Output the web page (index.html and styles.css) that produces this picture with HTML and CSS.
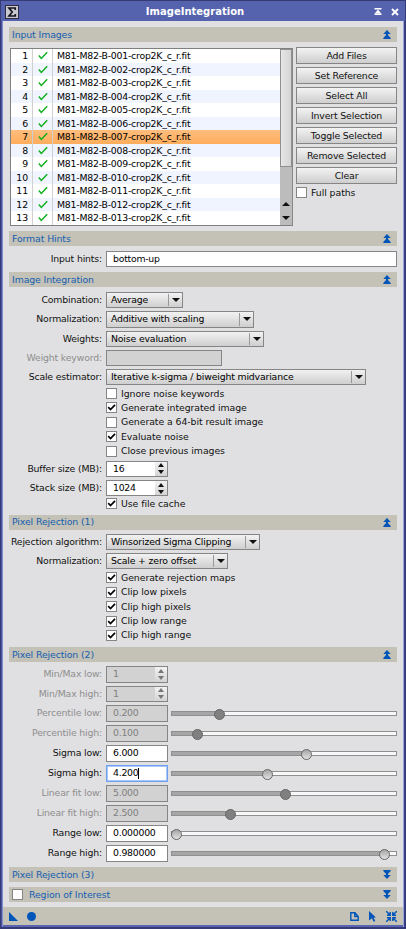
FILE: index.html
```
<!DOCTYPE html>
<html lang="en">
<head>
<meta charset="utf-8">
<title>ImageIntegration</title>
<link rel="stylesheet" href="styles.css">
</head>
<body>
<svg class="defs" aria-hidden="true">
  <symbol id="tick" viewBox="0 0 11 11"><path d="M2.2 5.2 4.5 7.6 9 2.8" fill="none" stroke="#000" stroke-width="1.7"/></symbol>
  <symbol id="ok" viewBox="0 0 10 9"><path d="M.8 4.6 3.3 7.4 9.2 1.2" fill="none" stroke="#10b020" stroke-width="1.5"/></symbol>
  <symbol id="up" viewBox="0 0 8 9"><path d="M4 0 7.7 4H5V5L7.7 8V9H.3V8L3 5V4H.3Z" fill="#0055b8"/></symbol>
  <symbol id="down" viewBox="0 0 8 9"><path d="M.3 0H7.7V1L5 4V5H7.7L4 9 .3 5H3V4L.3 1Z" fill="#0055b8"/></symbol>
</svg>
<div class="window">
  <header class="title">
    <svg class="app-icon" viewBox="0 0 14 14"><rect x=".5" y=".5" width="13" height="13" fill="#c9c9d2" stroke="#302a40"/><path d="M10.2 5V3H4L7.2 6.9 4 11H10.3V9" fill="none" stroke="#17131f" stroke-width="1.7"/></svg>
    <h1>ImageIntegration</h1>
    <svg class="shade" viewBox="0 0 8 7"><path d="M.5 .8H7.5M.5 6.2H7.5" stroke="#fff" stroke-width="1.4"/><path d="M4 1.5 7.3 5.5H.7Z" fill="#fff"/></svg>
    <svg class="close" viewBox="0 0 8 8"><path d="M1 1 7 7M7 1 1 7" stroke="#fff" stroke-width="1.9"/></svg>
  </header>
  <main>
    <h2>Input Images<svg><use href="#up"/></svg></h2>
    <section class="images">
      <div class="list">
        <div class="rows" id="rows"></div>
        <div class="scroll"><div class="thumb"></div><i class="tri up"></i><i class="tri"></i></div>
      </div>
      <div class="buttons">
        <button>Add Files</button>
        <button>Set Reference</button>
        <button>Select All</button>
        <button>Invert Selection</button>
        <button>Toggle Selected</button>
        <button>Remove Selected</button>
        <button>Clear</button>
        <div class="check"><span class="box"></span><span>Full paths</span></div>
      </div>
    </section>

    <h2>Format Hints<svg><use href="#up"/></svg></h2>
    <section class="form hints">
      <div class="row"><label>Input hints:</label><div class="edit full">bottom-up</div></div>
    </section>

    <h2>Image Integration<svg><use href="#up"/></svg></h2>
    <section class="form integration">
      <div class="row"><label>Combination:</label><div class="combo c77"><span>Average</span><b><i class="tri"></i></b></div></div>
      <div class="row"><label>Normalization:</label><div class="combo c148"><span>Additive with scaling</span><b><i class="tri"></i></b></div></div>
      <div class="row"><label>Weights:</label><div class="combo c158"><span>Noise evaluation</span><b><i class="tri"></i></b></div></div>
      <div class="row off"><label>Weight keyword:</label><div class="edit c116"></div></div>
      <div class="row"><label>Scale estimator:</label><div class="combo c260"><span>Iterative k-sigma / biweight midvariance</span><b><i class="tri"></i></b></div></div>
      <div class="checks">
        <div class="check"><span class="box"></span><span>Ignore noise keywords</span></div>
        <div class="check"><span class="box"><svg><use href="#tick"/></svg></span><span>Generate integrated image</span></div>
        <div class="check"><span class="box"></span><span>Generate a 64-bit result image</span></div>
        <div class="check"><span class="box"><svg><use href="#tick"/></svg></span><span>Evaluate noise</span></div>
        <div class="check"><span class="box"></span><span>Close previous images</span></div>
      </div>
      <div class="row"><label>Buffer size (MB):</label><div class="edit spin">16<b><i class="tri up"></i><i class="tri"></i></b></div></div>
      <div class="row"><label>Stack size (MB):</label><div class="edit spin">1024<b><i class="tri up"></i><i class="tri"></i></b></div></div>
      <div class="checks cache">
        <div class="check"><span class="box"><svg><use href="#tick"/></svg></span><span>Use file cache</span></div>
      </div>
    </section>

    <h2>Pixel Rejection (1)<svg><use href="#up"/></svg></h2>
    <section class="form rejection">
      <div class="row"><label>Rejection algorithm:</label><div class="combo c154"><span>Winsorized Sigma Clipping</span><b><i class="tri"></i></b></div></div>
      <div class="row"><label>Normalization:</label><div class="combo c122"><span>Scale + zero offset</span><b><i class="tri"></i></b></div></div>
      <div class="checks">
        <div class="check"><span class="box"><svg><use href="#tick"/></svg></span><span>Generate rejection maps</span></div>
        <div class="check"><span class="box"><svg><use href="#tick"/></svg></span><span>Clip low pixels</span></div>
        <div class="check"><span class="box"><svg><use href="#tick"/></svg></span><span>Clip high pixels</span></div>
        <div class="check"><span class="box"><svg><use href="#tick"/></svg></span><span>Clip low range</span></div>
        <div class="check"><span class="box"><svg><use href="#tick"/></svg></span><span>Clip high range</span></div>
      </div>
    </section>

    <h2>Pixel Rejection (2)<svg><use href="#up"/></svg></h2>
    <section class="form params">
      <div class="row off"><label>Min/Max low:</label><div class="edit spin">1<b><i class="tri up"></i><i class="tri"></i></b></div></div>
      <div class="row off"><label>Min/Max high:</label><div class="edit spin">1<b><i class="tri up"></i><i class="tri"></i></b></div></div>
      <div class="row off"><label>Percentile low:</label><div class="edit">0.200</div><div class="slider" style="--v:47px"></div></div>
      <div class="row off"><label>Percentile high:</label><div class="edit">0.100</div><div class="slider" style="--v:25px"></div></div>
      <div class="row"><label>Sigma low:</label><div class="edit">6.000</div><div class="slider" style="--v:134px"></div></div>
      <div class="row"><label>Sigma high:</label><div class="edit focus">4.200<span class="caret"></span></div><div class="slider" style="--v:95px"></div></div>
      <div class="row off"><label>Linear fit low:</label><div class="edit">5.000</div><div class="slider" style="--v:113px"></div></div>
      <div class="row off"><label>Linear fit high:</label><div class="edit">2.500</div><div class="slider" style="--v:58px"></div></div>
      <div class="row"><label>Range low:</label><div class="edit">0.000000</div><div class="slider" style="--v:4px"></div></div>
      <div class="row"><label>Range high:</label><div class="edit">0.980000</div><div class="slider" style="--v:212px"></div></div>
    </section>

    <h2>Pixel Rejection (3)<svg><use href="#down"/></svg></h2>
    <h2 class="roi"><span class="box"></span>Region of Interest<svg><use href="#down"/></svg></h2>
  </main>
  <footer>
    <svg class="f1" viewBox="0 0 9 9"><path d="M0 0 9 9H0Z" fill="#0055b8"/></svg>
    <svg class="f2" viewBox="0 0 9 9"><circle cx="4.5" cy="4.5" r="4.5" fill="#0055b8"/></svg>
    <svg class="f3" viewBox="0 0 9 9"><path d="M.8 .8H5L8.2 4.5V8.2H.8ZM4.8 .8V4.5H8.2" fill="none" stroke="#0055b8" stroke-width="1.4"/></svg>
    <svg class="f4" viewBox="0 0 8 11"><path d="M0 0 7 6.5H4.6L6.3 10 4.6 10.8 3 7.3 0 9.5Z" fill="#0055b8"/></svg>
    <svg class="f5" viewBox="0 0 11 11"><path d="M0 0 4 4M11 0 7 4M0 11 4 7M11 11 7 7M1 4.2H4.2V1M10 4.2H6.8V1M1 6.8H4.2V10M10 6.8H6.8V10" fill="none" stroke="#0055b8" stroke-width="1.4"/></svg>
  </footer>
</div>
<script src="rows.js"></script>
</body>
</html>
```
FILE: rows.js
```
const rows = document.getElementById('rows');
for (let n = 1; n <= 13; n++) {
  const row = document.createElement('div');
  row.className = n === 7 ? 'file selected' : 'file';
  row.innerHTML = `<span class="num">${n}</span><span class="state"><svg><use href="#ok"/></svg></span>` +
    `<span class="name">M81-M82-B-${String(n).padStart(3, '0')}-crop2K_c_r.fit</span>`;
  rows.append(row);
}
```
FILE: styles.css
```
* { box-sizing: border-box; }
body { margin: 0; font: 9.33px/12px "DejaVu Sans", sans-serif; letter-spacing: -.1px; color: #111; }
.defs { position: absolute; width: 0; height: 0; }
svg { display: block; flex: none; }
.window {
  width: 406px; height: 929px; display: flex; flex-direction: column;
  background: #e0e0e2; border: solid #363b78; border-width: 1px 1px 2px;
  box-shadow: inset 1px 0 #4a549c, inset 2px 0 #7f8bd0, inset -1px 0 #36408c, inset -2px 0 #9aa2d6, inset 0 -2px #5965b0;
}
.title { height: 20px; flex: none; display: flex; align-items: center; background: #5562ae; padding: 1px 6px 0 4px; }
.app-icon { width: 14px; height: 14px; }
.title h1 { margin: 0; flex: 1; text-align: center; font-size: 10px; line-height: 14px; letter-spacing: 0; color: #fff; padding-right: 3px; }
.shade { width: 8px; height: 7px; margin-right: 9px; }
.close { width: 8px; height: 8px; }
main { flex: 1; padding: 6px 8px 0; display: flex; flex-direction: column; }
h2 {
  margin: 0; height: 15px; flex: none; display: flex; align-items: center; background: #c4c1b7;
  color: #1460b0; font-size: 9.33px; font-weight: normal; padding: 0 6px 0 3px;
}
h2 svg { width: 8px; height: 9px; margin-left: auto; }
.images { height: 184px; margin: 5px 0 0; padding-bottom: 5px; display: flex; justify-content: space-between; }
.list { width: 283px; height: 178px; margin: 1px 0 0 1px; border: 1px solid #808080; border-right-width: 0; display: flex; background: #fff; }
.rows { flex: 1; display: grid; grid-template-rows: repeat(13, 1fr); }
.file { display: grid; grid-template-columns: 22px 20px 1fr; line-height: 13px; min-height: 0; color: #000; }
.file:nth-child(even) { background: #f0f4fe; }
.file.selected { background: linear-gradient(#ffbd7d, #ffad5c); }
.num { text-align: right; padding-right: 4px; border-right: 1px solid #d0d0d0; }
.state { border-right: 1px solid #d0d0d0; padding: 2px 0 0 5px; }
.state svg { width: 10px; height: 9px; }
.name { padding-left: 4px; white-space: nowrap; letter-spacing: -.22px; }
.scroll { width: 13px; background: #bcbcbc; border-right: 1px solid #888; display: flex; flex-direction: column; align-items: center; }
.thumb { width: 12px; height: 118px; background: linear-gradient(90deg, #e6e6e6, #d4d4d4); border: 1px solid #909090; margin-bottom: auto; }
.scroll .tri { margin-bottom: 10px; }
.scroll .tri:last-child { margin-bottom: 5px; }
.tri { display: block; width: 0; height: 0; border: solid transparent; border-width: 0 4px; border-top: 4px solid #111; }
.tri.up { border-top: 0; border-bottom: 4px solid #111; }
.buttons { width: 101px; display: flex; flex-direction: column; gap: 3px; }
button {
  height: 17px; padding: 0; border: 1px solid #858585; background: linear-gradient(#f3f3f3, #cecece);
  font: inherit; color: inherit; text-align: center; letter-spacing: -.14px;
}
.check { height: 11px; display: flex; align-items: center; gap: 4px; white-space: nowrap; letter-spacing: -.06px; }
.box { width: 11px; height: 11px; flex: none; background: #fff; border: 1px solid #858585; }
.box svg { width: 11px; height: 11px; margin: -1px; }
.form { display: flex; flex-direction: column; gap: 3px; padding-top: 5px; flex: none; }
.hints { height: 26px; }
.integration { height: 227.5px; }
.rejection { height: 117.5px; padding-top: 4px; }
.rejection .checks { margin-top: .3px; }
.params { height: 205px; padding-top: 4px; }
.row { height: 16.3px; flex: none; display: flex; align-items: stretch; }
.row label { width: 93px; margin-right: 4px; text-align: right; line-height: 15px; white-space: nowrap; letter-spacing: -.16px; }
.edit { width: 62px; border: 1px solid #858585; background: #fff; padding-left: 6px; line-height: 14px; display: flex; color: #000; letter-spacing: -.25px; }
.edit.full { width: auto; flex: 1; }
.combo { border: 1px solid #858585; background: linear-gradient(#f2f2f2, #cfcfcf); display: flex; justify-content: space-between; padding-left: 4px; line-height: 13px; white-space: nowrap; color: #000; letter-spacing: -.16px; }
.combo b { width: 14px; margin: 1px 0; border-left: 1px solid #999; display: flex; align-items: center; justify-content: center; }
.c77 { width: 77px; } .c116 { width: 116px; } .c122 { width: 122px; } .c148 { width: 148px; }
.c154 { width: 154px; } .c158 { width: 158px; } .c260 { width: 260px; }
.spin b { margin-left: auto; width: 12px; background: linear-gradient(#f2f2f2, #d4d4d4); display: flex; flex-direction: column; justify-content: space-around; align-items: center; }
.spin .tri { border-left-width: 3px; border-right-width: 3px; }
.off label { color: #8e8e8e; }
.off .edit { background: #d2d2d2; color: #808080; }
.off .tri { border-top-color: #777; }
.off .tri.up { border-bottom-color: #777; }
.checks { display: flex; flex-direction: column; gap: 3.4px; padding-left: 97px; margin: -.4px 0 1px; }
.cache { margin-top: -.9px; }
.params .row { height: 17px; }
.params .row:nth-child(-n+2) { height: 16.5px; }
.focus { border: 1px solid #6f9fef; box-shadow: inset 0 0 0 1px #a9c8fa; }
.caret { width: 1px; height: 11px; margin: 2px 0; background: #000; }
.slider { --fill: #a6a6a6; flex: 1; height: 5px; margin: 6px 0 0 3px; border: 1px solid #8f8f8f; position: relative; background: linear-gradient(90deg, var(--fill) var(--v), #f8f8f8 var(--v)); }
.slider::after { content: ""; position: absolute; left: calc(var(--v) - 5px); top: -3px; width: 9px; height: 9px; border-radius: 50%; border: 1px solid #666; background: linear-gradient(#a5a5a5, #e2e2e2); }
.off .slider::after { background: #808080; }
.roi { margin-top: 5px; }
.roi .box { margin-right: 6px; }
footer { height: 18px; flex: none; margin: 0 2px 2px; background: #c4c1b7; display: flex; align-items: center; padding: 1px 6px 0; }
.f1, .f2, .f3 { width: 9px; height: 9px; }
.f2 { margin-left: 9px; }
.f3 { margin-left: auto; }
.f4 { width: 8px; height: 11px; margin-left: 10px; }
.f5 { width: 11px; height: 11px; margin-left: 9px; }
```
